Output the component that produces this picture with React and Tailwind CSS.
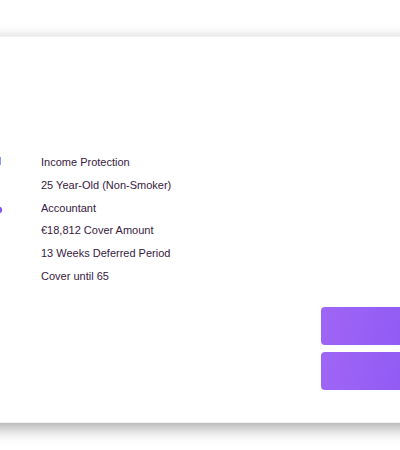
const details = [
  'Income Protection',
  '25 Year-Old (Non-Smoker)',
  'Accountant',
  '€18,812 Cover Amount',
  '13 Weeks Deferred Period',
  'Cover until 65',
];

// Trailing edge of the provider logo that runs off the left side of the card
function LogoEdge() {
  return (
    <svg className="mt-1 h-16 w-3 shrink-0" viewBox="0 0 12 64" aria-hidden="true">
      <rect x="-3" y="2" width="4" height="8" fill="#8c97ff" />
      <ellipse cx="-1" cy="55" rx="3.2" ry="3.3" fill="#8055f6" />
    </svg>
  );
}

const buttonStyle =
  'block h-[38px] w-full rounded-l bg-linear-100 from-[#9f66f5] to-[#925bf3]';

export default function App() {
  return (
    <main className="overflow-hidden bg-white pt-9 pb-7 font-['Liberation_Sans',Arial,sans-serif]">
      <section className="-mx-5 border-y border-[#eeeeee] bg-white px-5 pt-[114px] pb-8 shadow-[0_5px_15px_rgba(0,0,0,0.35)]">
        <div className="flex items-start gap-[29px]">
          <LogoEdge />
          <ul className="grid h-[136px] grid-rows-6 items-center text-[11px] leading-4 text-[#37203f]">
            {details.map((detail) => (
              <li key={detail}>{detail}</li>
            ))}
          </ul>
        </div>
        <div className="ml-auto mt-5 flex w-[79px] flex-col gap-[7px]">
          <button type="button" aria-label="Get covered" className={buttonStyle} />
          <button type="button" aria-label="View details" className={buttonStyle} />
        </div>
      </section>
    </main>
  );
}
